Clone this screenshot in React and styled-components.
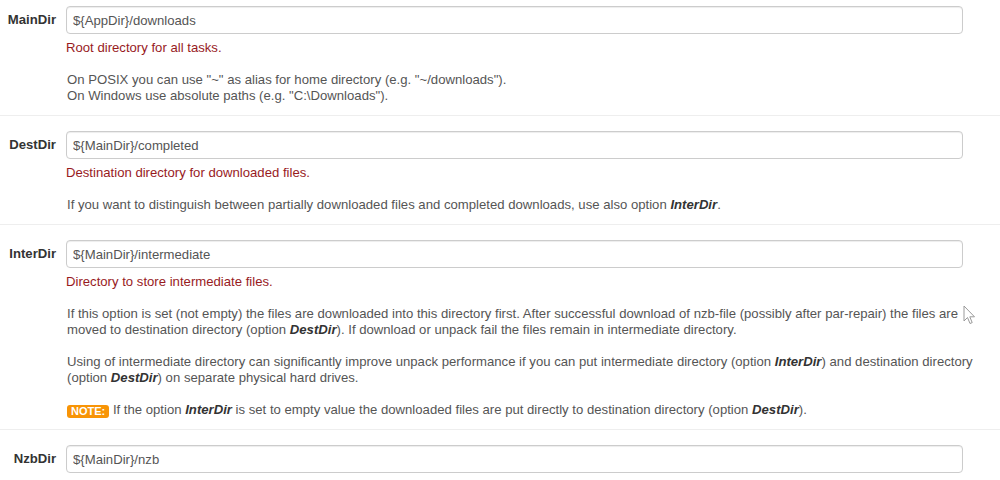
import React from "react"
import styled, { createGlobalStyle } from "styled-components"

const GlobalStyle = createGlobalStyle`
  html, body {
    margin: 0;
    padding: 0;
    background: #fff;
  }
  body {
    font-family: "Liberation Sans", Arial, sans-serif;
    font-size: 13.15px;
    line-height: 16px;
    color: #555;
  }
`

const Page = styled.div`
  position: relative;
  width: 1000px;
  height: 480px;
  overflow: hidden;
`

const Group = styled.div`
  display: grid;
  grid-template-columns: 56px 1fr;
  column-gap: 10px;
  padding: ${p => (p.first ? "6px" : "15px")} 5px 11px 0;
  border-top: ${p => (p.first ? "none" : "1px solid #eee")};
`

const Label = styled.label`
  height: 28px;
  display: flex;
  align-items: center;
  justify-content: flex-end;
  font-weight: bold;
  color: #333;
`

const Controls = styled.div`
  display: flex;
  flex-direction: column;
  min-width: 0;
`

const Input = styled.input`
  box-sizing: border-box;
  width: calc(100% - 32px);
  height: 28px;
  padding: 4px 6px;
  border: 1px solid #ccc;
  border-radius: 4px;
  box-shadow: inset 0 1px 1px rgba(0, 0, 0, 0.075);
  font-family: inherit;
  font-size: 13.15px;
  color: #555;
  outline: none;
`

const Summary = styled.p`
  margin: 6px 0 0;
  color: #981b1e;
`

const Para = styled.p`
  margin: 16px 0 0;
  padding-left: 1px;
  color: #555;
`

const Opt = styled.b`
  font-style: italic;
  color: #333;
`

const Note = styled.span`
  display: inline-block;
  padding: 0 4px;
  height: 13px;
  line-height: 13px;
  border-radius: 3px;
  background: #f89406;
  color: #fff;
  font-size: 11px;
  font-weight: bold;
  vertical-align: -1px;
`

const Cursor = styled.svg`
  position: absolute;
  left: 963px;
  top: 305px;
`

const options = [
  {
    name: "MainDir",
    value: "${AppDir}/downloads",
    summary: "Root directory for all tasks.",
    paras: [
      <>
        On POSIX you can use "~" as alias for home directory (e.g. "~/downloads").
        <br />
        On Windows use absolute paths (e.g. "C:\Downloads").
      </>,
    ],
  },
  {
    name: "DestDir",
    value: "${MainDir}/completed",
    summary: "Destination directory for downloaded files.",
    paras: [
      <>
        If you want to distinguish between partially downloaded files and completed downloads, use also option <Opt>InterDir</Opt>.
      </>,
    ],
  },
  {
    name: "InterDir",
    value: "${MainDir}/intermediate",
    summary: "Directory to store intermediate files.",
    paras: [
      <>
        If this option is set (not empty) the files are downloaded into this directory first. After successful download of nzb-file (possibly after par-repair) the files are moved to destination directory (option <Opt>DestDir</Opt>). If download or unpack fail the files remain in intermediate directory.
      </>,
      <>
        Using of intermediate directory can significantly improve unpack performance if you can put intermediate directory (option <Opt>InterDir</Opt>) and destination directory (option <Opt>DestDir</Opt>) on separate physical hard drives.
      </>,
      <>
        <Note>NOTE:</Note> If the option <Opt>InterDir</Opt> is set to empty value the downloaded files are put directly to destination directory (option <Opt>DestDir</Opt>).
      </>,
    ],
  },
  {
    name: "NzbDir",
    value: "${MainDir}/nzb",
    summary: null,
    paras: [],
  },
]

export default function App() {
  return (
    <Page>
      <GlobalStyle />
      {options.map((o, i) => (
        <Group key={o.name} first={i === 0}>
          <Label>{o.name}</Label>
          <Controls>
            <Input defaultValue={o.value} />
            {o.summary && <Summary>{o.summary}</Summary>}
            {o.paras.map((p, j) => (
              <Para key={j}>{p}</Para>
            ))}
          </Controls>
        </Group>
      ))}
      <Cursor width="13" height="20" viewBox="0 0 13 20">
        <path d="M1 1 L1 16 L4.5 12.5 L7 18.5 L9.2 17.6 L6.8 11.8 L11.5 11.8 Z" fill="#fff" stroke="#9a9a9a" strokeWidth="1" strokeLinejoin="round" />
      </Cursor>
    </Page>
  )
}
